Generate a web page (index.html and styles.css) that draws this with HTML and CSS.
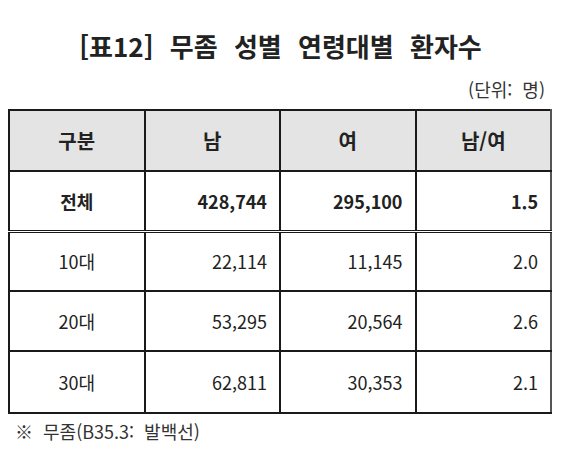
FILE: index.html
```html
<!DOCTYPE html>
<html lang="ko">
<head>
  <meta charset="UTF-8" />
  <title>무좀 성별 연령대별 환자수</title>
  <link rel="stylesheet" href="styles.css">
</head>
<body>
  <h1 class="title">[표12] 무좀 성별 연령대별 환자수</h1>
  <p class="unit">(단위: 명)</p>

  <table class="stats">
    <thead>
      <tr>
        <th>구분</th>
        <th>남</th>
        <th>여</th>
        <th>남/여</th>
      </tr>
    </thead>
    <tbody>
      <tr class="total">
        <td class="label">전체</td>
        <td>428,744</td>
        <td>295,100</td>
        <td>1.5</td>
      </tr>
      <tr>
        <td class="label">10대</td>
        <td>22,114</td>
        <td>11,145</td>
        <td>2.0</td>
      </tr>
      <tr>
        <td class="label">20대</td>
        <td>53,295</td>
        <td>20,564</td>
        <td>2.6</td>
      </tr>
      <tr class="last">
        <td class="label">30대</td>
        <td>62,811</td>
        <td>30,353</td>
        <td>2.1</td>
      </tr>
    </tbody>
  </table>

  <p class="note">※ 무좀(B35.3: 발백선)</p>
</body>
</html>
```

FILE: styles.css
```css
* {
  box-sizing: border-box;
  margin: 0;
  padding: 0;
}

body {
  width: 561px;
  padding: 0 8px;
  font-family: "Noto Sans CJK KR", "Noto Sans", sans-serif;
  color: #222;
  background: #fff;
}

.title {
  margin-top: 27px;
  text-align: center;
  font-size: 26px;
  font-weight: bold;
  word-spacing: 9px;
  line-height: 38px;
}

.unit {
  margin-top: 11px;
  padding-right: 8px;
  text-align: right;
  font-size: 18px;
  line-height: 26px;
  color: #333;
  word-spacing: 5px;
}

.stats {
  margin-top: 7px;
  width: 544px;
  border-collapse: collapse;
  table-layout: fixed;
  font-size: 18px;
}

.stats th,
.stats td {
  border: 2px solid #1a1a1a;
  height: 60px;
  padding: 0 12px;
  text-align: right;
}

.stats th {
  background: #e4e4e4;
  text-align: center;
  font-size: 20px;
  font-weight: bold;
  height: 61px;
}

.stats td.label {
  text-align: center;
}

.stats tr.total td {
  font-weight: bold;
  border-bottom: 3px double #1a1a1a;
}

.stats tr.last td {
  height: 62px;
}

.stats th:last-child,
.stats td:last-child {
  border-right-color: #555;
}

.note {
  margin-top: 4px;
  padding-left: 7px;
  font-size: 18px;
  line-height: 26px;
  color: #333;
  word-spacing: 5px;
}
```
